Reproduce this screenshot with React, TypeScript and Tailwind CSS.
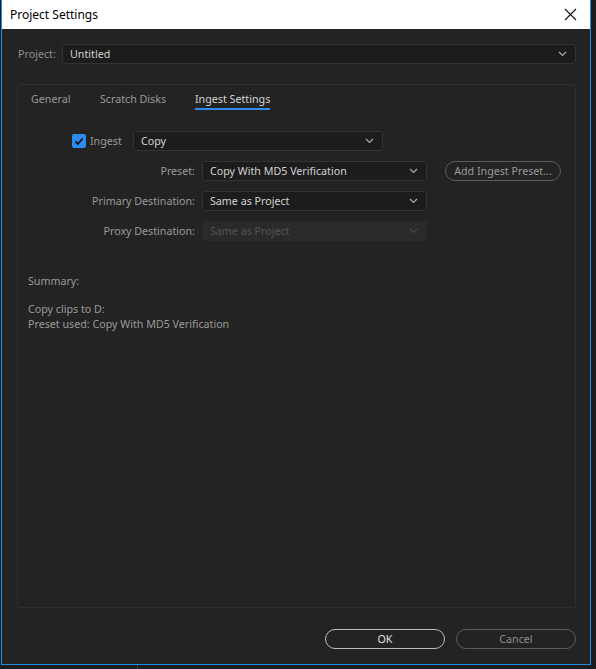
import React from "react";

const font = { fontFamily: '"Noto Sans", "Open Sans", sans-serif' };

const Chevron = ({ dim = false }: { dim?: boolean }) => (
  <svg width="9" height="6" viewBox="0 0 9 6" className="shrink-0">
    <polyline
      points="1,1 4.5,4.5 8,1"
      fill="none"
      stroke={dim ? "#4a4a4a" : "#aaaaaa"}
      strokeWidth="1.2"
    />
  </svg>
);

const Select = ({
  value,
  width,
  disabled = false,
}: {
  value: string;
  width: string;
  disabled?: boolean;
}) => (
  <div
    className={`${width} h-[20px] flex items-center justify-between pl-[7px] pr-[8px] rounded-[3px] border ${
      disabled
        ? "bg-[#2a2a2a] border-[#2a2a2a] text-[#555555]"
        : "bg-[#1c1c1c] border-[#333333] text-[#d2d2d2]"
    }`}
  >
    <span className="leading-none">{value}</span>
    <Chevron dim={disabled} />
  </div>
);

const Tab = ({ label, w, active = false }: { label: string; w: string; active?: boolean }) => (
  <div className={w}>
    <span
      className={`inline-block pb-[1px] border-b-2 ${
        active ? "border-[#2d8ceb] text-[#d2d2d2]" : "border-transparent text-[#9a9a9a]"
      }`}
    >
      {label}
    </span>
  </div>
);

export default function App() {
  return (
    <div
      className="relative w-[596px] h-[669px] bg-[#1d1d1d] overflow-hidden text-[10.7px]"
      style={font}
    >
      <div className="ml-px w-[590px] h-[665px] flex flex-col border-x border-b border-[#1b8ee6] bg-[#232323]">
        {/* title bar */}
        <div className="h-[29px] bg-white flex items-center justify-between pl-[8px] pr-[13px] text-[12px] text-black">
          <span>Project Settings</span>
          <svg width="13" height="13" viewBox="0 0 13 13">
            <path d="M1 1L12 12M12 1L1 12" stroke="#111" strokeWidth="1.1" />
          </svg>
        </div>

        {/* project row */}
        <div className="mt-[15px] ml-[16px] mr-[14px] flex items-center">
          <span className="w-[44px] text-[#8f8f8f]">Project:</span>
          <Select value="Untitled" width="flex-1" />
        </div>

        {/* panel */}
        <div className="mt-[20px] ml-[15px] mr-[14px] h-[524px] border border-[#2f2f2f] rounded-[3px] flex flex-col">
          <div className="pt-[7px] pl-[13px] flex leading-[15px]">
            <Tab label="General" w="w-[69px]" />
            <Tab label="Scratch Disks" w="w-[95px]" />
            <Tab label="Ingest Settings" w="w-[100px]" active />
          </div>

          <div className="mt-[21px] flex flex-col gap-[10px]">
            <div className="flex items-center">
              <div className="ml-[54px] w-[14px] h-[14px] rounded-[2px] bg-[#2d8ceb] flex items-center justify-center">
                <svg width="10" height="9" viewBox="0 0 10 9">
                  <polyline points="1.5,4.5 4,7 8.5,1.5" fill="none" stroke="#141414" strokeWidth="1.8" />
                </svg>
              </div>
              <span className="ml-[4px] w-[43px] text-[#9a9a9a]">Ingest</span>
              <Select value="Copy" width="w-[250px]" />
            </div>

            <div className="flex items-center">
              <span className="w-[184px] pr-[7px] text-right text-[#9a9a9a]">Preset:</span>
              <Select value="Copy With MD5 Verification" width="w-[225px]" />
              <div className="ml-[18px] w-[116px] h-[20px] rounded-full border border-[#5c5c5c] flex items-center justify-center text-[#9a9a9a]">
                Add Ingest Preset...
              </div>
            </div>

            <div className="flex items-center">
              <span className="w-[184px] pr-[7px] text-right text-[#9a9a9a]">Primary Destination:</span>
              <Select value="Same as Project" width="w-[225px]" />
            </div>

            <div className="flex items-center">
              <span className="w-[184px] pr-[7px] text-right text-[#9a9a9a]">Proxy Destination:</span>
              <Select value="Same as Project" width="w-[225px]" disabled />
            </div>
          </div>

          <div className="mt-[33px] pl-[10px] text-[#9a9a9a] leading-[15px]">
            <div>Summary:</div>
            <div className="mt-[13px]">Copy clips to D:</div>
            <div>Preset used: Copy With MD5 Verification</div>
          </div>
        </div>

        {/* buttons */}
        <div className="mt-[21px] mr-[14px] flex justify-end gap-[11px]">
          <div className="w-[120px] h-[20px] rounded-full border border-[#bdbdbd] flex items-center justify-center text-[#e0e0e0]">
            OK
          </div>
          <div className="w-[120px] h-[20px] rounded-full border border-[#5c5c5c] flex items-center justify-center text-[#8f8f8f]">
            Cancel
          </div>
        </div>
      </div>
      <div className="absolute left-[137px] top-[665px] w-px h-[4px] bg-[#3a3a3a]" />
    </div>
  );
}
